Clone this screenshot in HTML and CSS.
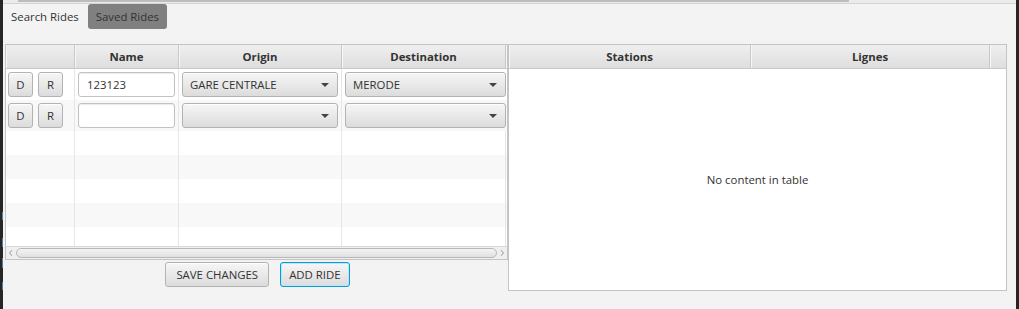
FILE: index.html
```html
<!DOCTYPE html>
<html lang="en">
<head>
    <meta charset="UTF-8">
    <title>Rides</title>
    <link rel="stylesheet" href="styles.css">
</head>
<body>
    <div class="window">
        <div class="edge edge-left"></div>

        <div class="app">
            <div class="topbar"><div class="topbar-thumb"></div></div>

            <!-- Tabs -->
            <div class="tabs">
                <span class="tab">Search Rides</span>
                <span class="tab tab-selected">Saved Rides</span>
            </div>

            <div class="content">
                <!-- Saved rides -->
                <div class="rides">
                    <div class="table rides-table">
                        <div class="thead rides-cols">
                            <div class="th"></div>
                            <div class="th">Name</div>
                            <div class="th">Origin</div>
                            <div class="th">Destination</div>
                            <div class="th th-filler"></div>
                        </div>

                        <div class="tbody">
                            <div class="tr tr-edit rides-cols">
                                <div class="td td-actions">
                                    <button class="btn btn-small">D</button>
                                    <button class="btn btn-small">R</button>
                                </div>
                                <div class="td"><div class="field">123123</div></div>
                                <div class="td">
                                    <div class="combo"><span>GARE CENTRALE</span><i class="arrow"></i></div>
                                </div>
                                <div class="td td-last">
                                    <div class="combo"><span>MERODE</span><i class="arrow"></i></div>
                                </div>
                                <div class="td td-filler"></div>
                            </div>
                            <div class="tr tr-edit rides-cols">
                                <div class="td td-actions">
                                    <button class="btn btn-small">D</button>
                                    <button class="btn btn-small">R</button>
                                </div>
                                <div class="td"><div class="field"></div></div>
                                <div class="td">
                                    <div class="combo"><span></span><i class="arrow"></i></div>
                                </div>
                                <div class="td td-last">
                                    <div class="combo"><span></span><i class="arrow"></i></div>
                                </div>
                                <div class="td td-filler"></div>
                            </div>
                            <div class="tr rides-cols"><div class="td"></div><div class="td"></div><div class="td"></div><div class="td"></div><div class="td td-filler"></div></div>
                            <div class="tr rides-cols"><div class="td"></div><div class="td"></div><div class="td"></div><div class="td"></div><div class="td td-filler"></div></div>
                            <div class="tr rides-cols"><div class="td"></div><div class="td"></div><div class="td"></div><div class="td"></div><div class="td td-filler"></div></div>
                            <div class="tr rides-cols"><div class="td"></div><div class="td"></div><div class="td"></div><div class="td"></div><div class="td td-filler"></div></div>
                            <div class="tr rides-cols"><div class="td"></div><div class="td"></div><div class="td"></div><div class="td"></div><div class="td td-filler"></div></div>
                        </div>

                        <div class="hscroll">
                            <svg class="hscroll-arrow" viewBox="0 0 9 13"><polyline points="6,3.5 3.5,6.5 6,9.5"/></svg>
                            <div class="hscroll-track"><div class="hscroll-thumb"></div></div>
                            <svg class="hscroll-arrow" viewBox="0 0 9 13"><polyline points="3,3.5 5.5,6.5 3,9.5"/></svg>
                        </div>
                    </div>

                    <div class="actions">
                        <button class="btn">SAVE CHANGES</button>
                        <button class="btn btn-focused">ADD RIDE</button>
                    </div>
                </div>

                <!-- Results -->
                <div class="table results-table">
                    <div class="thead results-cols">
                        <div class="th">Stations</div>
                        <div class="th">Lignes</div>
                        <div class="th th-filler"></div>
                    </div>
                    <div class="placeholder">No content in table</div>
                </div>
            </div>
        </div>

        <div class="edge edge-right"></div>
    </div>
</body>
</html>
```

FILE: styles.css
```css
* {
    margin: 0;
    padding: 0;
    box-sizing: border-box;
    font-family: 'Open Sans', 'Noto Sans', sans-serif;
}

body {
    background: #f3f3f3;
    color: #333;
    font-size: 11.4px;
}

.window {
    display: flex;
    height: 309px;
}

.edge {
    width: 3px;
    background-color: #262626;
}

.edge-left {
    background-image:
        linear-gradient(#4d7ea6, #4d7ea6),
        linear-gradient(#4d7ea6, #4d7ea6),
        linear-gradient(#4d7ea6, #4d7ea6),
        linear-gradient(#4d7ea6, #4d7ea6);
    background-size: 1px 8px, 1px 9px, 1px 10px, 1px 8px;
    background-position: 2px 212px, 2px 238px, 2px 258px, 2px 282px;
    background-repeat: no-repeat;
}

.app {
    flex: 1;
    display: flex;
    flex-direction: column;
    padding-right: 9px;
}

/* Top scroll strip */
.topbar {
    height: 4px;
    margin-right: -9px;
    background: #ebebeb;
    border-bottom: 1px solid #d4d4d4;
}

.topbar-thumb {
    width: 831px;
    height: 2px;
    margin-left: 15px;
    background: #bdbdbd;
}

/* Tabs */
.tabs {
    display: flex;
    gap: 1px;
    height: 25px;
    margin-bottom: 15px;
}

.tab {
    padding: 0 8px;
    line-height: 25px;
    border-radius: 3px;
}

.tab-selected {
    background: #808080;
}

.content {
    display: flex;
    padding-left: 2px;
}

/* Tables */
.table {
    background: #fff;
    border: 1px solid #c4c4c4;
    display: flex;
    flex-direction: column;
}

.rides-cols {
    display: grid;
    grid-template-columns: 69px 104px 163px 164px 1fr;
}

.results-cols {
    display: grid;
    grid-template-columns: 242px 239px 1fr;
}

.thead {
    height: 24px;
    background: linear-gradient(#efefef, #dedede);
    border-bottom: 1px solid #c8c8c8;
}

.th {
    font-weight: bold;
    text-align: center;
    line-height: 23px;
    border-right: 1px solid #c8c8c8;
    box-shadow: inset 1px 0 0 #f7f7f7;
}

.th-filler {
    border-right: none;
}

.rides {
    display: flex;
    flex-direction: column;
}

.rides-table {
    width: 503px;
    height: 216px;
}

.tbody {
    flex: 1;
    overflow: hidden;
}

.tr {
    height: 24px;
}

.tr:nth-child(even) {
    background: #f8f8f8;
}

.tr-edit {
    height: 31px;
}

.td {
    border-right: 1px solid #e6e6e6;
    padding: 3px 3px 0 3px;
}

.td-actions {
    display: flex;
    gap: 5px;
    padding-left: 2px;
}

.td-last {
    padding-right: 0;
    border-right: none;
}

.td-filler {
    border-right: none;
}

/* Controls */
.btn {
    background: linear-gradient(#f6f6f6, #dcdcdc);
    border: 1px solid #b3b3b3;
    border-radius: 3px;
    box-shadow: inset 0 1px 0 #fdfdfd;
    color: #333;
    font-size: 11.4px;
    height: 25px;
    padding: 0 10px;
    cursor: pointer;
}

.btn-small {
    width: 25px;
    padding: 0;
}

.btn-focused {
    padding: 0 8px;
    border-color: #039ed3;
    box-shadow: inset 0 0 0 1px #bfe4f3;
}

.field {
    height: 25px;
    background: #fff;
    border: 1px solid #c2c2c2;
    border-radius: 3px;
    box-shadow: inset 0 1px 1px #ececec;
    padding-left: 8px;
    line-height: 23px;
}

.combo {
    height: 25px;
    display: flex;
    align-items: center;
    justify-content: space-between;
    padding: 0 8px 0 7px;
    background: linear-gradient(#f6f6f6, #dcdcdc);
    border: 1px solid #b3b3b3;
    border-radius: 3px;
    box-shadow: inset 0 1px 0 #fdfdfd;
}

.arrow {
    width: 0;
    height: 0;
    border-left: 4px solid transparent;
    border-right: 4px solid transparent;
    border-top: 4px solid #444;
}

/* Horizontal scrollbar */
.hscroll {
    height: 13px;
    display: flex;
    align-items: center;
    background: #efefef;
    border-top: 1px solid #dadada;
}

.hscroll-arrow {
    width: 9px;
    height: 12px;
    fill: none;
    stroke: #8c8c8c;
    stroke-width: 1;
}

.hscroll-track {
    flex: 1;
    padding: 0 1px;
}

.hscroll-thumb {
    height: 10px;
    border: 1px solid #b8b8b8;
    border-radius: 5px;
    background: linear-gradient(#f4f4f4, #e0e0e0);
}

.actions {
    display: flex;
    justify-content: center;
    gap: 11px;
    margin-top: 2px;
    padding-left: 2px;
}

.results-table {
    width: 499px;
    height: 247px;
}

.placeholder {
    flex: 1;
    display: flex;
    align-items: center;
    justify-content: center;
}
```
